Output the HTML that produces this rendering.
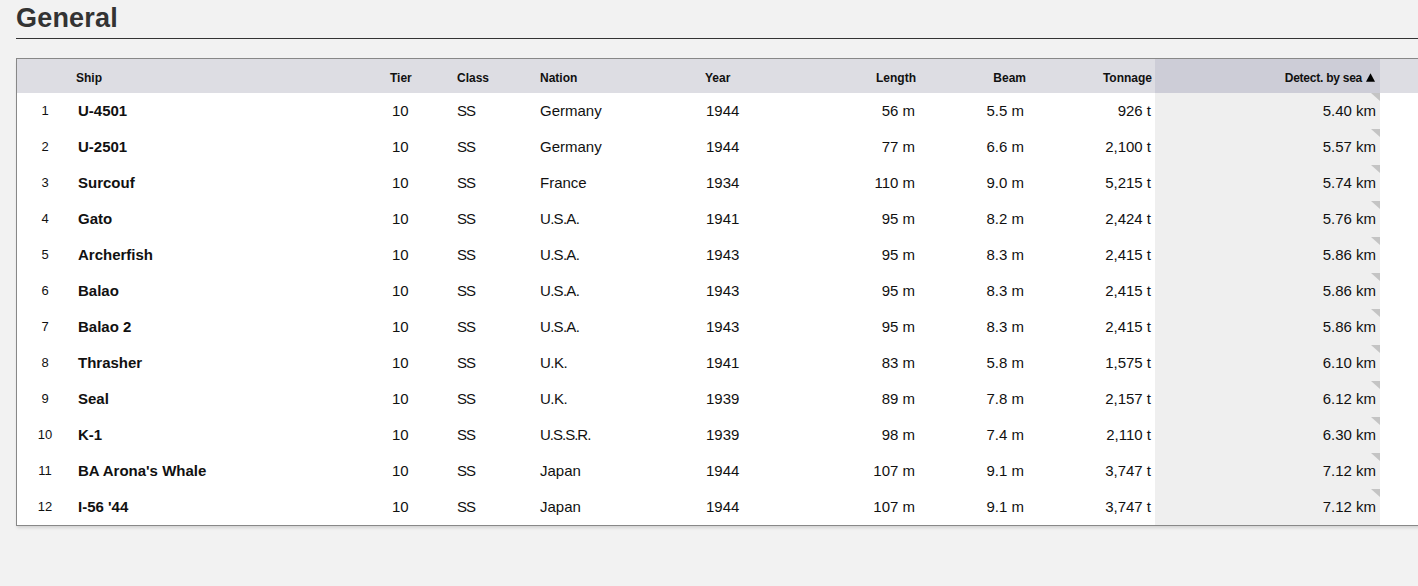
<!DOCTYPE html>
<html><head><meta charset="utf-8"><style>
html,body{margin:0;padding:0;width:1418px;height:586px;overflow:hidden;background:#f2f2f2;font-family:"Liberation Sans",sans-serif;}
.t{position:absolute;left:0;top:0;width:1418px;height:586px;}
h2{position:absolute;margin:0;left:16px;top:5px;font-size:27px;font-weight:bold;color:#333;line-height:1;letter-spacing:0.2px;}
.rule{position:absolute;left:16px;top:38px;width:1402px;height:1px;background:#333;}
.tbl{position:absolute;left:16px;top:58px;width:1500px;height:466px;border:1px solid #888;background:#fff;box-shadow:0 3px 3px -1px rgba(0,0,0,.13);}
.hdr{position:absolute;left:17px;top:59px;width:1401px;height:34px;background:#dddde3;}
.shdr{position:absolute;left:1155px;top:59px;width:225px;height:34px;background:#cdcdd7;}
.scol{position:absolute;left:1155px;top:93px;width:225px;height:432px;background:#efefef;}
.tri{position:absolute;width:0;height:0;border-top:8px solid #c4c4c4;border-left:9px solid transparent;}
.c{position:absolute;white-space:nowrap;line-height:20px;height:20px;color:#111;}
.h{font-weight:bold;font-size:12px;letter-spacing:0px;color:#111;}
.b{font-size:15px;letter-spacing:0px;}
.n{font-weight:bold;font-size:15px;letter-spacing:0px;}
.i{font-size:13px;letter-spacing:0px;width:40px;text-align:center;}
.r{text-align:right;}
</style></head><body><div class="t">
<h2>General</h2>
<div class="rule"></div>
<div class="tbl"></div>
<div class="hdr"></div>
<div class="shdr"></div>
<div class="scol"></div>

<div class="c h" style="left:76px;top:68px">Ship</div>
<div class="c h" style="left:390px;top:68px">Tier</div>
<div class="c h" style="left:457px;top:68px">Class</div>
<div class="c h" style="left:540px;top:68px">Nation</div>
<div class="c h" style="left:705px;top:68px">Year</div>
<div class="c r h" style="right:502px;top:68px">Length</div>
<div class="c r h" style="right:392px;top:68px">Beam</div>
<div class="c r h" style="right:266px;top:68px">Tonnage</div>
<div class="c r h" style="right:43px;top:68px"><span style="letter-spacing:-0.25px">Detect. by sea</span><svg width="9" height="9" viewBox="0 0 9 9" style="margin-left:4px;vertical-align:0px"><path d="M4.5 0.3L9 8.7H0Z" fill="#000"/></svg></div>
<div class="tri" style="left:1371px;top:93px"></div>
<div class="c i" style="left:25px;top:101px">1</div>
<div class="c n" style="left:78px;top:101px">U-4501</div>
<div class="c b" style="left:392px;top:101px">10</div>
<div class="c b" style="left:457px;top:101px"><span style="letter-spacing:-1px">SS</span></div>
<div class="c b" style="left:540px;top:101px">Germany</div>
<div class="c b" style="left:706px;top:101px">1944</div>
<div class="c r b" style="right:503px;top:101px">56 m</div>
<div class="c r b" style="right:394px;top:101px">5.5 m</div>
<div class="c r b" style="right:267px;top:101px">926 t</div>
<div class="c r b" style="right:42px;top:101px">5.40 km</div>
<div class="tri" style="left:1371px;top:129px"></div>
<div class="c i" style="left:25px;top:137px">2</div>
<div class="c n" style="left:78px;top:137px">U-2501</div>
<div class="c b" style="left:392px;top:137px">10</div>
<div class="c b" style="left:457px;top:137px"><span style="letter-spacing:-1px">SS</span></div>
<div class="c b" style="left:540px;top:137px">Germany</div>
<div class="c b" style="left:706px;top:137px">1944</div>
<div class="c r b" style="right:503px;top:137px">77 m</div>
<div class="c r b" style="right:394px;top:137px">6.6 m</div>
<div class="c r b" style="right:267px;top:137px">2,100 t</div>
<div class="c r b" style="right:42px;top:137px">5.57 km</div>
<div class="tri" style="left:1371px;top:165px"></div>
<div class="c i" style="left:25px;top:173px">3</div>
<div class="c n" style="left:78px;top:173px">Surcouf</div>
<div class="c b" style="left:392px;top:173px">10</div>
<div class="c b" style="left:457px;top:173px"><span style="letter-spacing:-1px">SS</span></div>
<div class="c b" style="left:540px;top:173px">France</div>
<div class="c b" style="left:706px;top:173px">1934</div>
<div class="c r b" style="right:503px;top:173px">110 m</div>
<div class="c r b" style="right:394px;top:173px">9.0 m</div>
<div class="c r b" style="right:267px;top:173px">5,215 t</div>
<div class="c r b" style="right:42px;top:173px">5.74 km</div>
<div class="tri" style="left:1371px;top:201px"></div>
<div class="c i" style="left:25px;top:209px">4</div>
<div class="c n" style="left:78px;top:209px">Gato</div>
<div class="c b" style="left:392px;top:209px">10</div>
<div class="c b" style="left:457px;top:209px"><span style="letter-spacing:-1px">SS</span></div>
<div class="c b" style="left:540px;top:209px"><span style="letter-spacing:-0.7px">U.S.A.</span></div>
<div class="c b" style="left:706px;top:209px">1941</div>
<div class="c r b" style="right:503px;top:209px">95 m</div>
<div class="c r b" style="right:394px;top:209px">8.2 m</div>
<div class="c r b" style="right:267px;top:209px">2,424 t</div>
<div class="c r b" style="right:42px;top:209px">5.76 km</div>
<div class="tri" style="left:1371px;top:237px"></div>
<div class="c i" style="left:25px;top:245px">5</div>
<div class="c n" style="left:78px;top:245px">Archerfish</div>
<div class="c b" style="left:392px;top:245px">10</div>
<div class="c b" style="left:457px;top:245px"><span style="letter-spacing:-1px">SS</span></div>
<div class="c b" style="left:540px;top:245px"><span style="letter-spacing:-0.7px">U.S.A.</span></div>
<div class="c b" style="left:706px;top:245px">1943</div>
<div class="c r b" style="right:503px;top:245px">95 m</div>
<div class="c r b" style="right:394px;top:245px">8.3 m</div>
<div class="c r b" style="right:267px;top:245px">2,415 t</div>
<div class="c r b" style="right:42px;top:245px">5.86 km</div>
<div class="tri" style="left:1371px;top:273px"></div>
<div class="c i" style="left:25px;top:281px">6</div>
<div class="c n" style="left:78px;top:281px">Balao</div>
<div class="c b" style="left:392px;top:281px">10</div>
<div class="c b" style="left:457px;top:281px"><span style="letter-spacing:-1px">SS</span></div>
<div class="c b" style="left:540px;top:281px"><span style="letter-spacing:-0.7px">U.S.A.</span></div>
<div class="c b" style="left:706px;top:281px">1943</div>
<div class="c r b" style="right:503px;top:281px">95 m</div>
<div class="c r b" style="right:394px;top:281px">8.3 m</div>
<div class="c r b" style="right:267px;top:281px">2,415 t</div>
<div class="c r b" style="right:42px;top:281px">5.86 km</div>
<div class="tri" style="left:1371px;top:309px"></div>
<div class="c i" style="left:25px;top:317px">7</div>
<div class="c n" style="left:78px;top:317px">Balao 2</div>
<div class="c b" style="left:392px;top:317px">10</div>
<div class="c b" style="left:457px;top:317px"><span style="letter-spacing:-1px">SS</span></div>
<div class="c b" style="left:540px;top:317px"><span style="letter-spacing:-0.7px">U.S.A.</span></div>
<div class="c b" style="left:706px;top:317px">1943</div>
<div class="c r b" style="right:503px;top:317px">95 m</div>
<div class="c r b" style="right:394px;top:317px">8.3 m</div>
<div class="c r b" style="right:267px;top:317px">2,415 t</div>
<div class="c r b" style="right:42px;top:317px">5.86 km</div>
<div class="tri" style="left:1371px;top:345px"></div>
<div class="c i" style="left:25px;top:353px">8</div>
<div class="c n" style="left:78px;top:353px">Thrasher</div>
<div class="c b" style="left:392px;top:353px">10</div>
<div class="c b" style="left:457px;top:353px"><span style="letter-spacing:-1px">SS</span></div>
<div class="c b" style="left:540px;top:353px"><span style="letter-spacing:-0.5px">U.K.</span></div>
<div class="c b" style="left:706px;top:353px">1941</div>
<div class="c r b" style="right:503px;top:353px">83 m</div>
<div class="c r b" style="right:394px;top:353px">5.8 m</div>
<div class="c r b" style="right:267px;top:353px">1,575 t</div>
<div class="c r b" style="right:42px;top:353px">6.10 km</div>
<div class="tri" style="left:1371px;top:381px"></div>
<div class="c i" style="left:25px;top:389px">9</div>
<div class="c n" style="left:78px;top:389px">Seal</div>
<div class="c b" style="left:392px;top:389px">10</div>
<div class="c b" style="left:457px;top:389px"><span style="letter-spacing:-1px">SS</span></div>
<div class="c b" style="left:540px;top:389px"><span style="letter-spacing:-0.5px">U.K.</span></div>
<div class="c b" style="left:706px;top:389px">1939</div>
<div class="c r b" style="right:503px;top:389px">89 m</div>
<div class="c r b" style="right:394px;top:389px">7.8 m</div>
<div class="c r b" style="right:267px;top:389px">2,157 t</div>
<div class="c r b" style="right:42px;top:389px">6.12 km</div>
<div class="tri" style="left:1371px;top:417px"></div>
<div class="c i" style="left:25px;top:425px">10</div>
<div class="c n" style="left:78px;top:425px">K-1</div>
<div class="c b" style="left:392px;top:425px">10</div>
<div class="c b" style="left:457px;top:425px"><span style="letter-spacing:-1px">SS</span></div>
<div class="c b" style="left:540px;top:425px"><span style="letter-spacing:-1.0px">U.S.S.R.</span></div>
<div class="c b" style="left:706px;top:425px">1939</div>
<div class="c r b" style="right:503px;top:425px">98 m</div>
<div class="c r b" style="right:394px;top:425px">7.4 m</div>
<div class="c r b" style="right:267px;top:425px">2,110 t</div>
<div class="c r b" style="right:42px;top:425px">6.30 km</div>
<div class="tri" style="left:1371px;top:453px"></div>
<div class="c i" style="left:25px;top:461px">11</div>
<div class="c n" style="left:78px;top:461px">BA Arona&#39;s Whale</div>
<div class="c b" style="left:392px;top:461px">10</div>
<div class="c b" style="left:457px;top:461px"><span style="letter-spacing:-1px">SS</span></div>
<div class="c b" style="left:540px;top:461px">Japan</div>
<div class="c b" style="left:706px;top:461px">1944</div>
<div class="c r b" style="right:503px;top:461px">107 m</div>
<div class="c r b" style="right:394px;top:461px">9.1 m</div>
<div class="c r b" style="right:267px;top:461px">3,747 t</div>
<div class="c r b" style="right:42px;top:461px">7.12 km</div>
<div class="tri" style="left:1371px;top:489px"></div>
<div class="c i" style="left:25px;top:497px">12</div>
<div class="c n" style="left:78px;top:497px">I-56 &#39;44</div>
<div class="c b" style="left:392px;top:497px">10</div>
<div class="c b" style="left:457px;top:497px"><span style="letter-spacing:-1px">SS</span></div>
<div class="c b" style="left:540px;top:497px">Japan</div>
<div class="c b" style="left:706px;top:497px">1944</div>
<div class="c r b" style="right:503px;top:497px">107 m</div>
<div class="c r b" style="right:394px;top:497px">9.1 m</div>
<div class="c r b" style="right:267px;top:497px">3,747 t</div>
<div class="c r b" style="right:42px;top:497px">7.12 km</div>
</div></body></html>
